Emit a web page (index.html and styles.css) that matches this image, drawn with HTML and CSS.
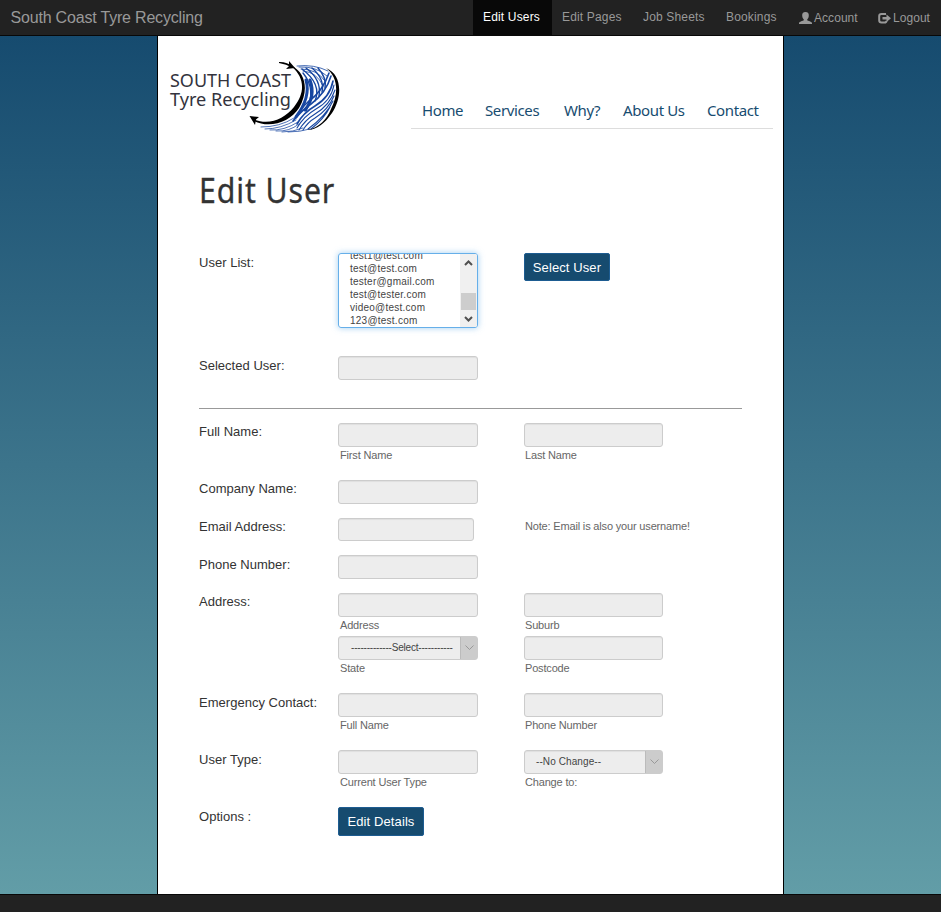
FILE: index.html
```html
<!DOCTYPE html>
<html lang="en">
<head>
<meta charset="utf-8">
<title>Edit User - South Coast Tyre Recycling</title>
<link rel="stylesheet" href="styles.css">
</head>
<body>
<header class="topbar">
  <div class="brand">South Coast Tyre Recycling</div>
  <nav class="admin">
    <a class="active">Edit Users</a><a>Edit Pages</a><a>Job Sheets</a><a>Bookings</a>
    <a class="with-icon"><svg width="13" height="13" viewBox="0 0 13 13"><path d="M6.500 0C9 0 10 1.500 9.800 3.700C9.700 5.500 9 6.700 8.200 7.500V8.300C9 9.200 12.700 9.400 13 11V12H0V11C.3 9.400 4 9.200 4.800 8.300V7.500C4 6.700 3.300 5.500 3.200 3.700C3 1.500 4 0 6.500 0Z" fill="currentColor"/></svg>Account</a>
    <a class="with-icon"><svg width="13" height="13" viewBox="0 0 13 13"><path d="M8 1.900H3.500Q1.200 1.900 1.200 4.100V8.300Q1.200 10.500 3.500 10.500H6.500Q8.500 10.500 8.500 8.700" fill="none" stroke="currentColor" stroke-width="2"/><path d="M4.500 4.900H8.500V2.400L13 6.200L8.500 9.900V7.500H4.500Z" fill="currentColor"/></svg>Logout</a>
  </nav>
</header>
<main class="page">
  <div class="masthead">
    <svg class="logo" width="174" height="76" viewBox="168 60 174 76">
      <g class="logo-text">
        <text x="170" y="87" textLength="121" lengthAdjust="spacingAndGlyphs">SOUTH COAST</text>
        <text x="170" y="106" textLength="121" lengthAdjust="spacingAndGlyphs">Tyre Recycling</text>
      </g>
      <g fill="none" stroke="#1746a0" stroke-linecap="round">
        <path stroke-width="1" opacity=".8" d="M297 66Q314 64 328 71M299 67Q316 66 327 76M301 69Q317 69 325 81M303 71Q317 72 323 86"/>
        <path stroke-width="1.400" d="M302 69Q322 84 315 101M303 73Q317 90 306 111M306 68Q322 80 319 96M312 68Q325 79 322 92M318 68Q327 78 325 88"/>
        <path stroke-width="3" d="M306 80Q311 97 296 117M310 80Q316 96 305 110"/>
        <path stroke-width="1.600" d="M329 73Q323 91 308 102Q302 107 295 118M331 76Q326 93 311 104Q301 111 293 121M333 81Q330 97 315 106Q303 113 297 124"/>
        <path stroke-width="1.100" d="M334 85Q331 101 316 109Q304 116 297 128M335 90Q330 105 315 114Q305 120 299 130M334 96Q328 110 315 118Q308 122 303 130M333 101Q326 116 308 129M330 107Q324 119 311 129"/>
        <path stroke-width="1" opacity=".75" d="M261 127Q280 127 294 118M265 129Q281 129 296 120M270 130Q284 131 298 122M276 131Q289 132 299 124M282 132Q293 132 303 128M288 132Q300 132 310 129"/>
      </g>
      <g fill="#000">
        <path d="M292 66C306 73 309 91 299 108C290 122 270 129 254 121L253 119C269 126 284 119 294 107C306 92 304 77 292 67Z"/>
        <path d="M279 62Q286 61.500 294 67L293 68Q286 64 279 63ZM289 61L295 68L286 69L289 66Z"/>
        <path d="M249.500 116L259 117L256 119.500L255 125Z"/>
        <path d="M326 68C343 75 342 98 332 113C325 123 317 130 307 130C319 128 327 119 331 109C339 93 338 77 326 68Z"/>
      </g>
    </svg>
    <nav class="site"><a>Home</a><a>Services</a><a>Why?</a><a>About Us</a><a>Contact</a></nav>
  </div>
  <h1>Edit User</h1>
  <form>
    <div class="row row-list">
      <label class="low">User List:</label>
      <div class="listbox">
        <ul><li>test1@test.com</li><li>test@test.com</li><li>tester@gmail.com</li><li>test@tester.com</li><li>video@test.com</li><li>123@test.com</li></ul>
        <div class="scroll">
          <svg width="9" height="6" viewBox="0 0 9 6"><path d="M1 5L4.500 1.500L8 5"/></svg>
          <i></i>
          <svg width="9" height="6" viewBox="0 0 9 6"><path d="M1 1L4.500 4.500L8 1"/></svg>
        </div>
      </div>
      <div><button type="button" class="select-user">Select User</button></div>
    </div>
    <div class="row row-selected"><label class="low">Selected User:</label><div><div class="field"></div></div></div>
    <hr>
    <div class="row"><label>Full Name:</label><div><div class="field"></div><small>First Name</small></div><div><div class="field narrow"></div><small class="second">Last Name</small></div></div>
    <div class="row short"><label>Company Name:</label><div><div class="field"></div></div></div>
    <div class="row shorter"><label>Email Address:</label><div><div class="field email"></div></div><small class="note">Note: Email is also your username!</small></div>
    <div class="row short"><label class="low">Phone Number:</label><div><div class="field"></div></div></div>
    <div class="row stacked"><label>Address:</label><div><div class="field"></div><small>Address</small></div><div><div class="field narrow"></div><small class="second">Suburb</small></div></div>
    <div class="row"><label></label><div><div class="field select"><span class="dashes">-------------Select-----------</span><b><svg width="9" height="6" viewBox="0 0 9 6"><path d="M.5 .5L4.500 4.500L8.500 .5"/></svg></b></div><small>State</small></div><div><div class="field narrow"></div><small class="second">Postcode</small></div></div>
    <div class="row"><label class="low">Emergency Contact:</label><div><div class="field"></div><small>Full Name</small></div><div><div class="field narrow"></div><small class="second">Phone Number</small></div></div>
    <div class="row"><label class="low">User Type:</label><div><div class="field"></div><small>Current User Type</small></div><div><div class="field narrow select"><span>--No Change--</span><b><svg width="9" height="6" viewBox="0 0 9 6"><path d="M.5 .5L4.500 4.500L8.500 .5"/></svg></b></div><small class="second">Change to:</small></div></div>
    <div class="row"><label class="low">Options :</label><div><button type="button" class="tall">Edit Details</button></div></div>
  </form>
</main>
<footer></footer>
</body>
</html>
```
FILE: styles.css
```css
* { box-sizing: border-box; }
body {
  margin: 0;
  height: 912px;
  overflow: hidden;
  display: flex;
  flex-direction: column;
  font: 13px/18px "Liberation Sans", Arial, sans-serif;
  color: #333;
  background: linear-gradient(#164b6f 36px, #629da7 894px);
}
.topbar {
  height: 36px;
  flex: none;
  display: flex;
  justify-content: space-between;
  background: #222;
  border-bottom: 1px solid #080808;
  color: #999;
}
.brand { padding-left: 10.5px; font-size: 16px; line-height: 35px; letter-spacing: -.19px; }
.admin { display: grid; grid-template-columns: 79px 81px 83px 73px 79px 73px; font-size: 12px; line-height: 34px; letter-spacing: .16px; }
.admin a { padding-left: 10px; white-space: nowrap; }
.admin .active { background: #080808; color: #fff; }
.admin .with-icon { display: flex; align-items: center; gap: 2px; line-height: 36px; letter-spacing: .05px; }
.page {
  width: 627px;
  flex: 1;
  margin-left: 157px;
  background: #fff;
  border: solid #000;
  border-width: 0 1px;
}
.masthead { height: 93px; display: flex; justify-content: space-between; padding: 24px 10px 0; }
.logo-text { font: 17.5px "Noto Sans", sans-serif; fill: #33333d; }
.site {
  width: 362px;
  height: 69px;
  display: grid;
  grid-template-columns: 63px 79px 59px 84px 77px;
  align-items: end;
  padding-bottom: 5px;
  border-bottom: 1px solid #ddd;
  color: #174c70;
  font: 15px/26px "Noto Sans", sans-serif;
  letter-spacing: -.38px;
}
.site a { padding-left: 11px; white-space: nowrap; }
h1 {
  margin: 36px 0 0 41px;
  font: 34px/51px "Noto Sans", sans-serif;
  letter-spacing: 1px;
  transform: scaleX(.89);
  transform-origin: left;
  -webkit-text-stroke: .3px #333;
}
form { margin: 37px 41px 0; }
.row { display: grid; grid-template-columns: 139px 186px 1fr; height: 57px; align-items: start; }
.row-list { height: 103px; }
.row-selected { height: 52px; }
.short { height: 38px; }
.shorter { height: 37px; }
.stacked { height: 43px; }
label { line-height: 18px; white-space: nowrap; letter-spacing: .02px; }
.low { padding-top: 1px; }
hr { margin: 0 0 14px; border: 0; border-top: 1px solid #999; }
.field {
  width: 140px;
  height: 24px;
  border: 1px solid #ccc;
  border-radius: 3px;
  background: #ededed;
  box-shadow: inset 0 1px 1px rgba(0,0,0,.06);
}
.narrow { width: 139px; }
.email { width: 136px; height: 23px; }
small { display: block; padding-left: 2px; font-size: 11px; line-height: 16px; letter-spacing: -.17px; color: #666; }
.second { padding-left: 1px; }
.note { padding-left: 1px; white-space: nowrap; }
.select { display: flex; justify-content: space-between; padding-left: 11px; font-size: 10px; line-height: 22px; letter-spacing: .1px; color: #444; }
.dashes { padding-left: 1px; letter-spacing: -.2px; white-space: nowrap; }
.select b { width: 17px; display: grid; place-items: center; background: #ccc; border-left: 1px solid #bbb; }
.select svg { fill: none; stroke: #999; }
.listbox {
  width: 140px;
  height: 75px;
  display: flex;
  justify-content: space-between;
  overflow: hidden;
  border: 1px solid #66afe9;
  border-radius: 3px;
  box-shadow: 0 0 6px rgba(102,175,233,.6);
}
.listbox ul { list-style: none; margin: -5px 0 0; padding-left: 11px; font-size: 10px; line-height: 13px; letter-spacing: .24px; color: #444; }
.scroll { width: 17px; display: grid; grid-template-rows: 39px 17px 17px; justify-items: center; background: #f0f0f0; }
.scroll i { width: 15px; background: #cdcdcd; }
.scroll svg { margin-top: 6px; fill: none; stroke: #505050; stroke-width: 2; }
button {
  width: 86px;
  height: 28px;
  padding: 0;
  border: 1px solid #1d5c91;
  border-radius: 2px;
  background: #164b6f;
  color: #fff;
  font: 13px/26px "Liberation Sans", Arial, sans-serif;
  letter-spacing: .1px;
  display: block;
}
.select-user { padding-top: 1px; }
.tall { height: 29px; }
footer { height: 18px; flex: none; background: #222; border-top: 1px solid #080808; }
```
